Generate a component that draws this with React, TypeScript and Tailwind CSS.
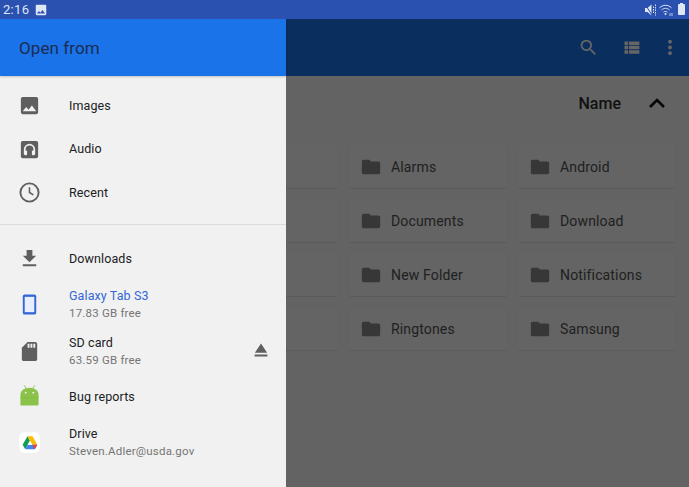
import type { ReactNode } from 'react';

const folders = [
  ['', 'Alarms', 'Android'],
  ['', 'Documents', 'Download'],
  ['', 'New Folder', 'Notifications'],
  ['', 'Ringtones', 'Samsung'],
];

function Mi({ d, className }: { d: string; className?: string }) {
  return (
    <svg viewBox="0 0 24 24" fill="currentColor" className={className}>
      <path d={d} />
    </svg>
  );
}

const FOLDER = 'M10 4H4c-1.100 0-2 .9-2 2v12c0 1.100.9 2 2 2h16c1.100 0 2-.9 2-2V8c0-1.100-.9-2-2-2h-8l-2-2z';
const IMAGE = 'M21 19V5c0-1.100-.9-2-2-2H5c-1.100 0-2 .9-2 2v14c0 1.100.9 2 2 2h14c1.100 0 2-.9 2-2zM8.500 13.500l2.500 3 3.500-4.500 4.500 6H5l3.500-4.500z';

function FolderCard({ name }: { name: string }) {
  return (
    <div className="flex h-[43px] w-[158px] items-center rounded-[1px] bg-[#f9f9f9] shadow-[0_0_1px_rgba(0,0,0,0.16),0_1px_1px_rgba(0,0,0,0.07)]">
      {name && <Mi d={FOLDER} className="ml-[11px] h-[22px] w-[22px] text-[#8a8a8a]" />}
      <span className="ml-[9px] mt-[1px] text-[14px] tracking-[0.15px] text-[#525252]">{name}</span>
    </div>
  );
}

function RootItem({ icon, title, sub, blue, h, action }: { icon: ReactNode; title: string; sub?: string; blue?: boolean; h: number; action?: ReactNode }) {
  return (
    <div className="flex items-center" style={{ height: h }}>
      <div className="flex w-[69px] shrink-0 items-center pl-[18px]">{icon}</div>
      <div className="flex-1 leading-[16px]">
        <div className={`text-[12.5px] tracking-[0.1px] ${blue ? 'text-[#3367d6]' : 'text-[#202124]'}`}>{title}</div>
        {sub && <div className="mt-[1px] text-[11.5px] tracking-[0.2px] text-[#757575]">{sub}</div>}
      </div>
      {action}
    </div>
  );
}

function DriveLogo() {
  return (
    <div className="ml-[1px] flex h-[21px] w-[21px] items-center justify-center rounded-[6px] bg-white">
      <svg viewBox="0 0 24 24" className="h-[16px] w-[16px]">
        <path d="M8.200 2 1 14.600l3.800 6.600L12 8.600z" fill="#0f9d58" />
        <path d="M8.200 2h7.600L23 14.600h-7.600z" fill="#fbbc04" />
        <path d="M23 14.600l-3.800 6.600H4.800l3.600-6.600z" fill="#4285f4" />
        <path d="M23 14.600l-3.800 6.600-3.800-6.600z" fill="#ea4335" />
        <path d="M12 8.600l-3.600 6h7z" fill="#fff" />
      </svg>
    </div>
  );
}

export default function App() {
  return (
    <div className="flex h-[487px] w-[689px] flex-col overflow-hidden bg-[#f8f8f8] font-['Roboto',sans-serif]">
      {/* status bar */}
      <div className="relative z-20 flex h-[19px] shrink-0 items-center justify-between bg-[#2a50b0] pl-[3px] pr-[4px] text-[#dfe6f5]">
        <div className="flex items-center gap-[5px]">
          <span className="text-[13px] leading-none tracking-[0.3px]">2:16</span>
          <Mi d={IMAGE} className="h-[14px] w-[14px]" />
        </div>
        <div className="flex items-center gap-[3px]">
          <svg viewBox="0 0 11 12" className="h-[12px] w-[11px]" fill="currentColor">
            <path d="M0 4h2.500L6.500 .5v11L2.500 8H0z" />
            <path d="M.5 1l6.500 10" stroke="#2a50b0" strokeWidth="1" />
            <path d="M8.500 2.500v7" stroke="currentColor" strokeWidth="1" strokeDasharray="1.500 1" />
            <path d="M10.500 .5v11" stroke="currentColor" strokeWidth="1" strokeDasharray="1.500 1" />
          </svg>
          <svg viewBox="0 0 15 12" className="h-[12px] w-[15px]" fill="none" stroke="currentColor" strokeWidth="1">
            <path d="M.5 3.800c3.500-3.300 8.500-3.300 12 0M2.500 6c2.500-2.200 5.500-2.200 8 0M4.500 8.200c1.300-1 2.700-1 4 0" />
            <circle cx="6.500" cy="10" r="1" fill="currentColor" stroke="none" />
            <path d="M11 9v3M13 9v3" strokeWidth=".8" />
          </svg>
          <div className="relative ml-[1px] h-[11px] w-[7px] rounded-[1px] bg-current">
            <div className="absolute -top-[1px] left-[2px] h-[1px] w-[3px] bg-current" />
          </div>
        </div>
      </div>

      {/* toolbar */}
      <div className="flex h-[57px] shrink-0 items-center justify-end bg-[#1a73e8] text-white">
        <Mi d="M15.500 14h-.79l-.28-.27A6.470 6.470 0 0016 9.500 6.500 6.500 0 109.500 16c1.610 0 3.090-.59 4.230-1.570l.27.28v.79l5 4.990L20.490 19l-4.990-5zm-6 0C7.010 14 5 11.990 5 9.500S7.010 5 9.500 5 14 7.010 14 9.500 11.990 14 9.500 14z" className="mr-[22px] h-[21px] w-[21px]" />
        <Mi d="M4 14h4v-4H4v4zm0 5h4v-4H4v4zM4 9h4V5H4v4zm5 5h12v-4H9v4zm0 5h12v-4H9v4zM9 5v4h12V5H9z" className="mr-[16px] h-[21px] w-[21px]" />
        <Mi d="M12 8c1.100 0 2-.9 2-2s-.9-2-2-2-2 .9-2 2 .9 2 2 2zm0 2c-1.100 0-2 .9-2 2s.9 2 2 2 2-.9 2-2-.9-2-2-2zm0 6c-1.100 0-2 .9-2 2s.9 2 2 2 2-.9 2-2-.9-2-2-2z" className="mr-[7px] h-[23px] w-[24px]" />
      </div>

      {/* sort row */}
      <div className="flex h-[56px] shrink-0 items-center justify-end pr-[20px] text-[#2c2c2c]">
        <span className="text-[16px] font-medium">Name</span>
        <svg viewBox="0 0 24 24" className="ml-[24px] h-[24px] w-[24px] text-[#111]" fill="none" stroke="currentColor" strokeWidth="2.600">
          <path d="M5 15l7-7 7 7" />
        </svg>
      </div>

      {/* grid */}
      <div className="flex flex-col gap-[11px] pl-[180px] pt-[13px]">
        {folders.map((row, i) => (
          <div key={i} className="flex gap-[11px]">
            {row.map((name, j) => (
              <FolderCard key={j} name={name} />
            ))}
          </div>
        ))}
      </div>

      {/* scrim */}
      <div className="absolute inset-0 z-10 bg-black/60" />

      {/* drawer */}
      <div className="absolute bottom-0 left-0 top-[19px] z-10 flex w-[286px] flex-col bg-[#f1f1f1]">
        <div className="flex h-[57px] shrink-0 items-center bg-[#1a73e8] pl-[19px] pt-[2px] text-[17px] tracking-[0.1px] text-[#1a2c52] shadow-[0_1px_2px_rgba(0,0,0,0.2)]">
          Open from
        </div>
        <div className="flex flex-col pt-[8px]">
          <RootItem h={43} title="Images" icon={<Mi d={IMAGE} className="h-[23px] w-[23px] text-[#5f5f5f]" />} />
          <RootItem h={44} title="Audio" icon={
            <svg viewBox="0 0 24 24" className="h-[23px] w-[23px]">
              <rect x="3" y="3" width="18" height="18" rx="2" fill="#5f5f5f" />
              <path d="M7 17v-5a5 5 0 0110 0v5" fill="none" stroke="#f1f1f1" strokeWidth="1.800" />
              <rect x="6.500" y="13" width="3" height="5" rx="1" fill="#f1f1f1" />
              <rect x="14.500" y="13" width="3" height="5" rx="1" fill="#f1f1f1" />
            </svg>
          } />
          <RootItem h={43} title="Recent" icon={
            <svg viewBox="0 0 24 24" className="h-[23px] w-[23px] text-[#5f5f5f]" fill="none" stroke="currentColor" strokeWidth="2">
              <circle cx="12" cy="12" r="9.500" />
              <path d="M12 6.500V12l4 2.500" strokeWidth="1.600" />
            </svg>
          } />
        </div>
        <div className="mt-[10px] h-[1px] bg-[#dcdcdc]" />
        <div className="flex flex-col pt-[12px]">
          <RootItem h={43} title="Downloads" icon={<Mi d="M19 9h-4V3H9v6H5l7 7 7-7zM5 18v2h14v-2H5z" className="h-[23px] w-[23px] text-[#5f5f5f]" />} />
          <RootItem h={49} blue title="Galaxy Tab S3" sub="17.83 GB free" icon={
            <svg viewBox="0 0 24 24" className="h-[23px] w-[23px]" fill="none">
              <rect x="5" y="1.500" width="14" height="21" rx="2" fill="#3367d6" />
              <rect x="7" y="4" width="10" height="16" fill="#e8eefb" />
            </svg>
          } />
          <RootItem h={44} title="SD card" sub="63.59 GB free" icon={<Mi d="M18 2h-8L4 8v12c0 1.100.9 2 2 2h12c1.100 0 2-.9 2-2V4c0-1.100-.9-2-2-2zm-6 6h-2V4h2v4zm3 0h-2V4h2v4zm3 0h-2V4h2v4z" className="h-[23px] w-[23px] text-[#5f5f5f]" />} action={
            <Mi d="M5 17h14v2H5zm7-12L5.330 15h13.340z" className="mb-[2px] mr-[14px] h-[22px] w-[22px] text-[#5f5f5f]" />
          } />
          <RootItem h={48} title="Bug reports" icon={
            <svg viewBox="0 0 24 24" className="mb-[3px] h-[23px] w-[23px]" fill="#8bc34a">
              <path d="M2.500 11.500C2.500 7 6.500 4 12 4s9.500 3 9.500 7.500V21.500c0 .6-.4 1-1 1h-17c-.6 0-1-.4-1-1z" />
              <path d="M6.500 1.500l2 3M17.500 1.500l-2 3" stroke="#8bc34a" strokeWidth="1" />
              <circle cx="8" cy="9" r="1" fill="#f1f1f1" />
              <circle cx="16" cy="9" r="1" fill="#f1f1f1" />
              <path d="M2.500 14h19" stroke="#7fb53f" strokeWidth=".6" />
            </svg>
          } />
          <RootItem h={43} title="Drive" sub="Steven.Adler@usda.gov" icon={<DriveLogo />} />
        </div>
      </div>
    </div>
  );
}
